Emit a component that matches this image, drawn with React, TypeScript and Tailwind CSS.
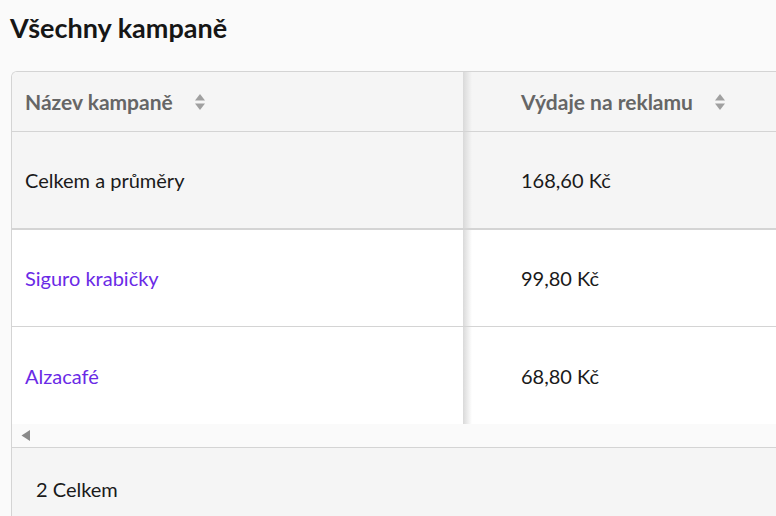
import React from 'react';

const SortIcon: React.FC = () => (
  <svg width="12" height="18" viewBox="0 0 12 18" className="shrink-0">
    <path d="M6 1 L11 7.5 L1 7.5 Z" fill="#a0a0a0" />
    <path d="M1 10.5 L11 10.5 L6 17 Z" fill="#a0a0a0" />
  </svg>
);

const rows = [
  { name: 'Siguro krabičky', spend: '99,80 Kč' },
  { name: 'Alzacafé', spend: '68,80 Kč' },
];

const App: React.FC = () => {
  return (
    <div
      className="w-[776px] h-[516px] overflow-hidden bg-[#fafafa] text-[#1a1a1a]"
      style={{ fontFamily: 'Lato, "Noto Sans", sans-serif' }}
    >
      <h1 className="pl-[10px] pt-[10px] h-[71px] text-[27px] font-bold leading-[36px] text-[#161616]">
        Všechny kampaně
      </h1>

      <div className="ml-[11px] w-[900px] border-l border-t border-[#d4d4d4] rounded-tl-[6px] overflow-hidden">
        {/* header */}
        <div className="flex h-[60px] bg-[#f5f5f5] border-b border-[#d4d4d4]">
          <div className="relative w-[451px] flex items-center pl-[13px] gap-[21px]">
            <span className="text-[21px] font-bold text-[#666666]">Název kampaně</span>
            <SortIcon />
            <div className="absolute right-[-9px] top-0 bottom-0 w-[9px] bg-gradient-to-r from-[#d9d9d9] to-transparent" />
          </div>
          <div className="flex items-center pl-[58px] gap-[21px]">
            <span className="text-[21px] font-bold text-[#666666]">Výdaje na reklamu</span>
            <SortIcon />
          </div>
        </div>

        {/* totals */}
        <div className="flex h-[98px] bg-[#f5f5f5] border-b-2 border-[#d4d4d4] text-[20px]">
          <div className="relative w-[451px] flex items-center pl-[13px]">
            Celkem a průměry
            <div className="absolute right-[-9px] top-0 bottom-0 w-[9px] bg-gradient-to-r from-[#d9d9d9] to-transparent" />
          </div>
          <div className="flex items-center pl-[58px]">168,60 Kč</div>
        </div>

        {rows.map((r, i) => (
          <div
            key={r.name}
            className={`flex h-[97px] bg-white text-[20px] ${i === 0 ? 'border-b border-[#d4d4d4]' : ''}`}
          >
            <div className="relative w-[451px] flex items-center pl-[13px] text-[#6a2ae6]">
              {r.name}
              <div className="absolute right-[-9px] top-0 bottom-0 w-[9px] bg-gradient-to-r from-[#d9d9d9] to-transparent" />
            </div>
            <div className="flex items-center pl-[58px]">{r.spend}</div>
          </div>
        ))}

        {/* scrollbar */}
        <div className="h-[24px] bg-[#fafafa] flex items-center pl-[9px] border-b border-[#d4d4d4]">
          <svg width="9" height="11" viewBox="0 0 9 11">
            <path d="M9 0 L9 11 L0.5 5.5 Z" fill="#8a8a8a" />
          </svg>
        </div>

        {/* footer */}
        <div className="h-[80px] bg-[#f5f5f5] pl-[24px] pt-[29px] text-[20px] leading-[24px]">
          2 Celkem
        </div>
      </div>
    </div>
  );
};

export default App;
